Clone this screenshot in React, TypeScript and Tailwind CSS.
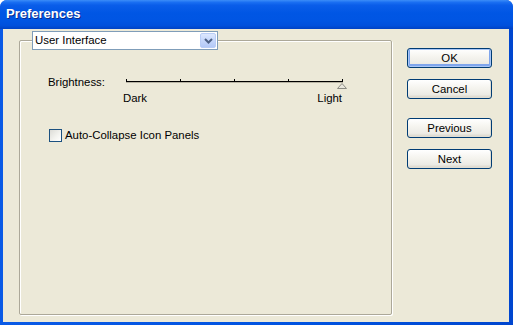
import React from "react";

const font = { fontFamily: '"Liberation Sans", Arial, sans-serif' };

function XPButton({ label, def = false }: { label: string; def?: boolean }) {
  return (
    <div
      className={
        "w-[85px] h-[20px] rounded-[3px] border border-[#003c74] flex items-center justify-center text-[11.4px] leading-[13px] text-black bg-[linear-gradient(to_bottom,#ffffff_0%,#f6f5f0_40%,#ecebe5_80%,#d8d2c6_100%)] " +
        (def
          ? "shadow-[inset_0_0_0_1px_#a8c6f6,inset_0_-1px_0_2px_#7fa5ec]"
          : "shadow-[inset_-1px_-1px_0_#e0ddd2]")
      }
    >
      {label}
    </div>
  );
}

function Slider() {
  return (
    <div className="relative w-[217px] mt-[3px]">
      <div className="flex justify-between h-[2px]">
        {[0, 1, 2, 3, 4].map((i) => (
          <div key={i} className="w-px h-[2px] bg-black" />
        ))}
      </div>
      <div className="h-px bg-black" />
      <div className="h-px bg-[#b8b4a4]" />
      <svg
        className="absolute left-[211px] top-[4px]"
        width="10"
        height="6"
        viewBox="0 0 10 6"
      >
        <polygon points="5,0.5 9.5,5.5 0.5,5.5" fill="#e8e6dc" stroke="#8c8c84" strokeWidth="1" />
      </svg>
      <div className="flex justify-between mt-[9px] text-[11.4px] leading-[13px] text-black pr-[1px]">
        <span className="-ml-[3px]">Dark</span>
        <span>Light</span>
      </div>
    </div>
  );
}

export default function App() {
  return (
    <div className="w-[513px] h-[325px] bg-white" style={font}>
      <div className="w-[513px] h-[325px] flex flex-col rounded-t-[7px] overflow-hidden bg-[linear-gradient(to_right,#0a5ae6_0%,#0053e0_60%,#0046cf_100%)]">
        <div className="h-[29px] shrink-0 flex items-center pl-[6px] pb-[1px] bg-[linear-gradient(to_bottom,#3c8df8_0%,#1a6ff2_8%,#0a5de9_18%,#0056e4_45%,#0055e3_70%,#0050dc_88%,#0042c4_100%)]">
          <span className="text-white font-bold text-[13px] leading-[16px] [text-shadow:1px_1px_0_#0c2c8c]">
            Preferences
          </span>
        </div>
        <div className="flex-1 ml-[3px] mr-[4px] mb-[3px] bg-[#ece9d8] flex items-start pl-[16px] pt-[11px]">
          <div className="relative w-[373px] h-[275px] border border-[#aca899] rounded-[2px] shadow-[inset_1px_1px_0_#ffffff,1px_1px_0_#ffffff] pl-[28px] pt-[35px] flex flex-col">
            <div className="absolute left-[12px] top-[-10px] w-[186px] h-[19px] bg-white border border-[#7f9db9] flex items-center">
              <span className="flex-1 pl-[2px] text-[11.4px] leading-[13px] text-black">User Interface</span>
              <div className="w-[16px] h-[15px] mr-px rounded-[2px] border border-[#b9cdf6] bg-[linear-gradient(to_bottom,#dde8fe_0%,#c6d7fb_50%,#b3c9f7_100%)] flex items-center justify-center">
                <svg width="9" height="6" viewBox="0 0 9 6">
                  <polyline points="1,1 4.5,4.5 8,1" fill="none" stroke="#4d6185" strokeWidth="2" />
                </svg>
              </div>
            </div>
            <div className="flex items-start">
              <span className="w-[78px] text-[11.4px] leading-[13px] text-black">Brightness:</span>
              <Slider />
            </div>
            <div className="flex items-center mt-[24px] ml-px">
              <div className="w-[13px] h-[13px] border border-[#1c5180] bg-[linear-gradient(135deg,#dcdcd7_0%,#f4f4f0_60%,#ffffff_100%)]" />
              <span className="ml-[3px] text-[11.4px] leading-[13px] text-black">Auto-Collapse Icon Panels</span>
            </div>
          </div>
          <div className="flex flex-col ml-[15px] mt-[8px]">
            <XPButton label="OK" def />
            <div className="h-[11px]" />
            <XPButton label="Cancel" />
            <div className="h-[19px]" />
            <XPButton label="Previous" />
            <div className="h-[11px]" />
            <XPButton label="Next" />
          </div>
        </div>
      </div>
    </div>
  );
}
